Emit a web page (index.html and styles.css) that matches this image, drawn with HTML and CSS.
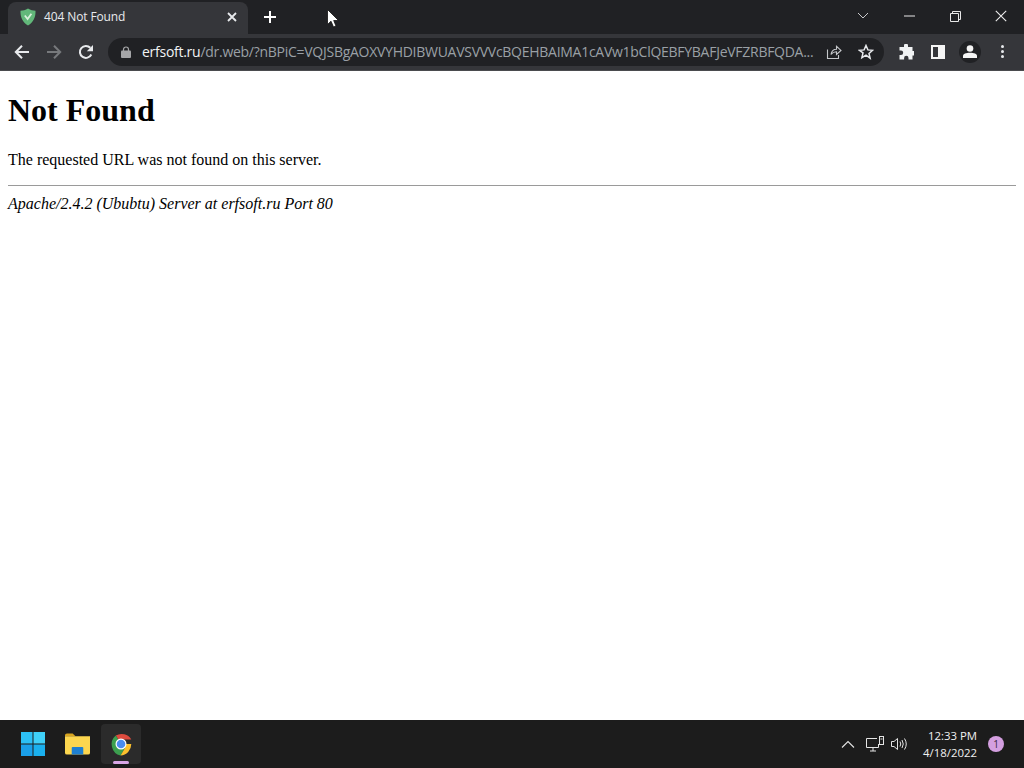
FILE: index.html
```html
<!DOCTYPE html>
<html lang="en">
<head>
<meta charset="utf-8">
<title>404 Not Found</title>
<link rel="stylesheet" href="styles.css">
</head>
<body>
<div class="screen">
  <header class="titlebar">
    <div class="tab">
      <svg class="shield" width="16" height="18" viewBox="0 0 16 18"><path d="M8 .5C10.500 2 13 2.600 15.500 2.800 15.800 9 13.500 14.500 8 17.500 2.500 14.500.2 9 .5 2.800 3 2.600 5.500 2 8 .5z" fill="#62b87a"/><path d="M4.800 7.500 7.600 11 11.400 5.800" fill="none" stroke="#d8f0dc" stroke-width="1.800"/></svg>
      <span class="tab-title">404 Not Found</span>
      <svg class="tab-close" width="10" height="10" viewBox="0 0 10 10"><path d="M1 1l8 8M9 1l-8 8" stroke="#e8eaed" stroke-width="1.800"/></svg>
    </div>
    <svg class="new-tab" width="14" height="14" viewBox="0 0 14 14"><path d="M7 1v12M1 7h12" stroke="#fff" stroke-width="2"/></svg>
    <div class="window-controls">
      <svg class="win-chevron" width="12" height="8" viewBox="0 0 12 8"><path d="M1 1l5 5 5-5" fill="none" stroke="#c8c9cb" stroke-width="1"/></svg>
      <svg class="win-min" width="11" height="2" viewBox="0 0 11 2"><path d="M0 1h11" stroke="#e8e8e8" stroke-width="1"/></svg>
      <svg class="win-restore" width="11" height="11" viewBox="0 0 11 11"><path d="M.5 2.500h8v8h-8zM2.500 2.500v-2h8v8h-2" fill="none" stroke="#e8e8e8" stroke-width="1"/></svg>
      <svg class="win-close" width="12" height="12" viewBox="0 0 12 12"><path d="M.8.800l10.400 10.400M11.200.800.800 11.200" stroke="#eee" stroke-width="1.100"/></svg>
    </div>
  </header>

  <nav class="toolbar">
    <div class="nav-buttons">
      <svg class="nav-icon" width="16" height="16" viewBox="0 0 16 16"><path d="M15 8H2M8 1.800 1.800 8 8 14.200" fill="none" stroke="#e8eaed" stroke-width="2"/></svg>
      <svg class="nav-icon" width="16" height="16" viewBox="0 0 16 16"><path d="M1 8h13M8 1.800 14.200 8 8 14.200" fill="none" stroke="#77797c" stroke-width="2"/></svg>
      <svg class="nav-icon" width="16" height="16" viewBox="0 0 16 16"><path d="M13.300 10.500A6 6 0 1 1 12.300 3.800" fill="none" stroke="#e8eaed" stroke-width="2"/><path d="M15 1v6.200H8.800z" fill="#e8eaed"/></svg>
    </div>
    <div class="omnibox">
      <svg class="lock" width="10" height="12" viewBox="0 0 10 12"><path d="M2.500 5V3.500a2.500 2.500 0 0 1 5 0V5" fill="none" stroke="#a5a6a8" stroke-width="1.200"/><rect y="4.500" width="10" height="7.500" rx="1" fill="#a5a6a8"/></svg>
      <div class="url"><span class="url-host">erfsoft.ru</span><span class="url-path">/dr.web/?nBPiC=VQJSBgAOXVYHDIBWUAVSVVVcBQEHBAIMA1cAVw1bClQEBFYBAFJeVFZRBFQDA...</span></div>
      <svg class="omni-icon" width="16" height="16" viewBox="0 0 16 16"><path d="M1.500 5.500V14.500H12.500V11M5 10.500C5.500 7 8 5.200 10.500 5.200V2.200L15 6.500 10.500 10.500V7.800C8.500 7.800 6.500 8.500 5 10.500z" fill="none" stroke="#c4c6c9" stroke-width="1.100"/></svg>
      <svg class="omni-icon" width="16" height="16" viewBox="0 0 16 16"><path d="M8 1.500l1.900 4.400 4.700.4-3.600 3.100 1.100 4.700L8 11.100 3.900 13.600 5 8.900 1.400 6.300l4.700-.4z" fill="none" stroke="#e8eaed" stroke-width="1.500"/></svg>
    </div>
    <div class="toolbar-actions">
      <svg class="action" width="16" height="16" viewBox="0 0 16 16"><path d="M6 1.500a2 2 0 0 1 4 0V3h4.500v4H16a2.200 2.200 0 0 1 0 4.500h-1.500V15.500H10.500V14a2.200 2.200 0 0 0-4.400 0v1.500H1.500V11H3a2.200 2.200 0 0 0 0-4.400H1.500V3H6z" fill="#f1f3f4"/></svg>
      <svg class="action" width="14" height="14" viewBox="0 0 14 14"><path d="M0 0h14v14H0zM2 2v10h5V2z" fill="#f5f5f5" fill-rule="evenodd"/></svg>
      <div class="avatar"><svg width="14" height="13" viewBox="0 0 14 13"><circle cx="7" cy="3.500" r="3.300" fill="#f4f4f4"/><path d="M0 13v-2c0-2 3-3.200 7-3.200s7 1.200 7 3.200v2z" fill="#f4f4f4"/></svg></div>
      <div class="kebab"><i></i><i></i><i></i></div>
    </div>
  </nav>

  <main class="page">
    <h1>Not Found</h1>
    <p>The requested URL was not found on this server.</p>
    <hr>
    <address>Apache/2.4.2 (Ububtu) Server at erfsoft.ru Port 80</address>
  </main>

  <footer class="taskbar">
    <div class="task-apps">
      <div class="task-app">
        <svg width="24" height="24" viewBox="0 0 24 24"><rect width="11.500" height="11.500" fill="#2cc0f5"/><rect x="12.500" width="11.500" height="11.500" fill="#3fd0f8"/><rect y="12.500" width="11.500" height="11.500" fill="#1a9fe8"/><rect x="12.500" y="12.500" width="11.500" height="11.500" fill="#1ab0ee"/></svg>
      </div>
      <div class="task-app">
        <svg width="25" height="22" viewBox="0 0 26 22"><path d="M0 2q0-2 2-2h6l3 3h-11z" fill="#d8a520"/><path d="M0 3h26v17q0 2-2 2H2q-2 0-2-2z" fill="#fcd64f"/><path d="M8 14h10q1 0 1 1v7H7v-7q0-1 1-1z" fill="#1e7fd0"/></svg>
      </div>
      <div class="task-app active">
        <svg width="24" height="24" viewBox="0 0 24 24"><path d="M12 12 6.800 3.500A11.500 11.500 0 0 1 22.300 7.500H12z" fill="#dd4b3e"/><path d="M12 12 6.800 3.500A11.500 11.500 0 0 0 11.500 23.500L16 16z" fill="#3c9f4f"/><path d="M12 12h10.300A11.500 11.500 0 0 1 11.500 23.500L16 16z" fill="#fbc02d"/><circle cx="12" cy="12" r="5.500" fill="#fff"/><circle cx="12" cy="12" r="4.300" fill="#4a8cf0"/></svg>
        <span class="indicator"></span>
      </div>
    </div>
    <div class="tray">
      <svg width="14" height="8" viewBox="0 0 14 8"><path d="M1 7.500 7 1.500l6 6" fill="none" stroke="#e4e4e4" stroke-width="1.100"/></svg>
      <svg width="18" height="16" viewBox="0 0 18 16"><path d="M11 2.500H.5v9h12V8M4 15h6M7 11.500V15" fill="none" stroke="#e4e4e4"/><rect x="13.500" y=".5" width="4" height="8" fill="none" stroke="#e4e4e4"/><path d="M14.500 3h2" stroke="#e4e4e4"/></svg>
      <svg width="17" height="14" viewBox="0 0 17 14"><path d="M.5 4.500h2.500L6.500 1.500v11L3 9.500H.5zM9 4.500q1.500 2.500 0 5M11 3q2.500 4 0 8M13.500 1.500q3.500 5.500 0 11" fill="none" stroke="#e4e4e4"/></svg>
      <div class="clock"><span>12:33 PM</span><span>4/18/2022</span></div>
      <span class="badge">1</span>
    </div>
  </footer>

  <svg class="cursor" width="12" height="19" viewBox="0 0 12 19"><path d="M.5.500V15.500L4 12.200 6.500 18 9 17 6.700 11.500H11.500z" fill="#fff" stroke="#111" stroke-width=".8"/></svg>
</div>
</body>
</html>
```

FILE: styles.css
```css
* { box-sizing: border-box; }
html, body { margin: 0; padding: 0; height: 100%; overflow: hidden; }
.screen {
  position: relative;
  width: 1024px;
  height: 768px;
  display: flex;
  flex-direction: column;
  background: #fff;
}

.titlebar {
  height: 34px;
  flex: none;
  display: flex;
  align-items: flex-end;
  background: #202124;
  padding-left: 8px;
  color: #e8eaed;
}
.tab {
  width: 240px;
  height: 32px;
  display: flex;
  align-items: center;
  gap: 8px;
  padding: 0 11px 2px 12px;
  background: #35363a;
  border-radius: 8px 8px 0 0;
  font: 12px/1 "Open Sans", "Liberation Sans", sans-serif;
  letter-spacing: -0.12px;
}
.shield { flex: none; }
.tab-title { flex: 1; white-space: nowrap; }
.tab-close { flex: none; }
.new-tab { margin: 0 0 10px 15px; flex: none; }
.window-controls {
  margin-left: auto;
  align-self: stretch;
  display: flex;
  align-items: center;
  padding: 0 17px 2px 0;
}
.win-chevron { margin-right: 35px; }
.win-min { margin-right: 35px; }
.win-restore { margin-right: 34px; }

.toolbar {
  height: 37px;
  flex: none;
  display: flex;
  align-items: center;
  background: #35363a;
  border-bottom: 1px solid #4a4b4e;
  padding: 0 0 1px 14px;
}
.nav-buttons {
  display: flex;
  gap: 16px;
  width: 94px;
  flex: none;
}
.omnibox {
  width: 776px;
  height: 28px;
  flex: none;
  display: flex;
  align-items: center;
  background: #202124;
  border-radius: 14px;
  padding: 0 10px 0 13px;
}
.lock { flex: none; margin-right: 11px; }
.url {
  width: 670px;
  flex: none;
  white-space: nowrap;
  font: 14px/1 "Open Sans", "Liberation Sans", sans-serif;
  letter-spacing: -0.27px;
}
.url-host { color: #f1f3f4; }
.url-path { color: #9aa0a6; }
.omni-icon { flex: none; margin-left: 14px; }
.omni-icon + .omni-icon { margin-left: 16px; }
.toolbar-actions {
  display: flex;
  align-items: center;
  padding-left: 14px;
  flex: none;
}
.action { flex: none; margin-right: 17px; }
.action + .action { margin-right: 14px; }
.avatar {
  width: 22px;
  height: 22px;
  border-radius: 50%;
  background: #202124;
  display: flex;
  align-items: center;
  justify-content: center;
  margin-right: 20px;
}
.kebab { display: flex; flex-direction: column; gap: 2px; }
.kebab i { display: block; width: 3px; height: 3px; border-radius: 50%; background: #e8eaed; }

.page {
  flex: 1;
  min-height: 0;
  padding: 8px;
  background: #fff;
  color: #000;
  font: 16px "Liberation Serif", "Times New Roman", serif;
}
h1 { font-size: 32px; font-weight: bold; margin: 13px 0 22px; line-height: 37px; }
.page p { margin: 0 0 16px; line-height: 18px; }
hr { margin: 0 0 0; border: 0; height: 1px; background: #9a9a9a; }
address { font-style: italic; line-height: 18px; margin-top: 9px; }

.taskbar {
  height: 48px;
  flex: none;
  display: flex;
  align-items: center;
  justify-content: space-between;
  background: #1c1c1c;
  color: #f0f0f0;
}
.task-apps { display: flex; align-items: center; padding-left: 13px; gap: 4px; }
.task-app {
  position: relative;
  width: 40px;
  height: 40px;
  display: flex;
  align-items: center;
  justify-content: center;
  border-radius: 4px;
}
.task-app.active { background: #2b2b2b; }
.indicator {
  position: absolute;
  left: 12px;
  bottom: 0;
  width: 16px;
  height: 3px;
  border-radius: 2px;
  background: #d9a6e6;
}
.tray { display: flex; align-items: center; gap: 7px; padding-right: 20px; }
.tray > svg:first-child { margin-right: 4px; }
.clock {
  display: flex;
  flex-direction: column;
  align-items: flex-end;
  margin: 0 4px 0 8px;
  font: 11.4px/17px "Open Sans", "Liberation Sans", sans-serif;
}
.badge {
  width: 16px;
  height: 16px;
  border-radius: 50%;
  background: #d49fe0;
  color: #3a2a40;
  font: 10px/16px "Open Sans", "Liberation Sans", sans-serif;
  text-align: center;
}
.cursor { position: absolute; left: 327px; top: 9px; }
```
